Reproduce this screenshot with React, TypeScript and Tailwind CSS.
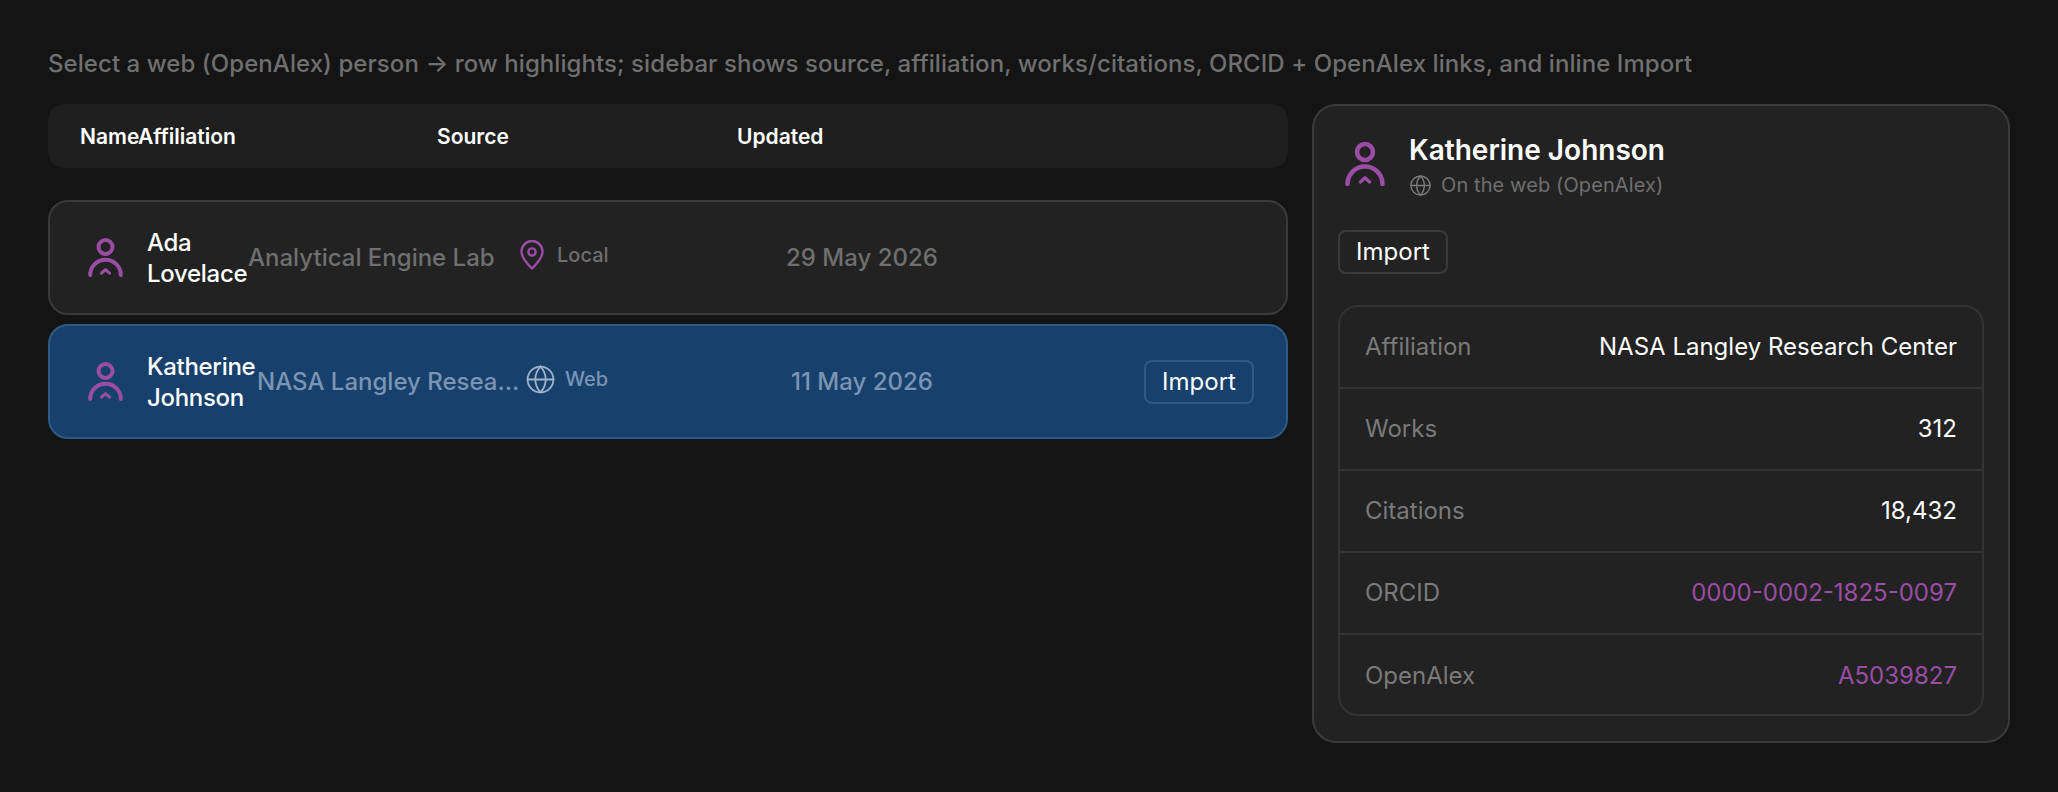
import { Globe } from "lucide-react";

function PersonIcon({ className }: { className?: string }) {
  return (
    <svg viewBox="0 0 35 39" fill="none" stroke="#9b4ca5" strokeLinecap="round" strokeLinejoin="round" className={className}>
      <circle cx="17.5" cy="9" r="7" strokeWidth="4" />
      <path d="M2.2 37a15.3 15.3 0 0 1 30.6 0" strokeWidth="4" />
      <path d="M13.5 35.2l4-3.6 4 3.6" strokeWidth="3" />
    </svg>
  );
}

function PinIcon() {
  return (
    <svg viewBox="0 0 24 30" fill="none" stroke="#9b4ca5" strokeWidth="2.4" strokeLinejoin="round" className="h-[30px] w-[24px] shrink-0">
      <path d="M12 28.5C8 24.5 1.5 18.5 1.5 11.5a10.5 10.5 0 0 1 21 0C22.5 18.5 16 24.5 12 28.5z" />
      <circle cx="12" cy="12" r="3.6" />
    </svg>
  );
}

function ImportButton({ selected }: { selected?: boolean }) {
  return (
    <button
      type="button"
      className={`flex h-[44px] items-center justify-center rounded-[8px] border-2 text-[24px] text-white ${
        selected ? "w-[110px] border-[#2f5a88]" : "w-[110px] border-[#3a3a3a]"
      }`}
    >
      Import
    </button>
  );
}

function DetailRow({ label, value, link }: { label: string; value: string; link?: boolean }) {
  return (
    <div className="flex h-[82px] items-center justify-between border-b-2 border-[#333333] px-[25px] last:border-b-0">
      <span className="text-[24px] text-[#7a7a7a]">{label}</span>
      <span className={`text-[24px] ${link ? "text-[#9b4ca5]" : "text-white"}`}>{value}</span>
    </div>
  );
}

export default function App() {
  return (
    <div className="h-[792px] bg-[#141414] px-[48px] pt-[48px] font-['Inter',sans-serif]">
      <p className="h-[32px] text-[24px] leading-[32px] font-medium tracking-[0.065px] whitespace-nowrap text-[#6f6f6f]">
        Select a web (OpenAlex) person → row highlights; sidebar shows source, affiliation, works/citations, ORCID + OpenAlex links, and inline Import
      </p>

      <div className="mt-[24px] flex gap-[24px]">
        <main className="w-[1240px]">
          <div className="flex h-[64px] items-center rounded-[16px] bg-[#1f1f1f] px-[32px] pt-[2px] text-[21px] font-semibold text-white">
            <span className="w-[58px]">Name</span>
            <span className="w-[299px]">Affiliation</span>
            <span className="w-[300px]">Source</span>
            <span>Updated</span>
          </div>

          <div className="mt-[32px] flex h-[115px] items-center rounded-[20px] border-2 border-[#3a3a3a] bg-[#222222] pl-[38px] pr-[32px]">
            <PersonIcon className="h-[39px] w-[35px] shrink-0" />
            <div className="ml-[24px] w-[101px] shrink-0 text-[24px] leading-[31px] font-medium tracking-[-0.3px] whitespace-nowrap text-white">
              Ada
              <br />
              Lovelace
            </div>
            <div className="w-[272px] shrink-0 text-[24px] font-medium whitespace-nowrap text-[#6f6f6f]">Analytical Engine Lab</div>
            <div className="mb-[5px] flex w-[266px] shrink-0 items-center gap-[13px]">
              <PinIcon />
              <span className="text-[20px] font-medium text-[#6f6f6f]">Local</span>
            </div>
            <div className="text-[24px] font-medium text-[#6f6f6f]">29 May 2026</div>
          </div>

          <div className="mt-[9px] flex h-[115px] items-center rounded-[20px] border-2 border-[#2f5a88] bg-[#17406d] pl-[38px] pr-[32px]">
            <PersonIcon className="h-[39px] w-[35px] shrink-0" />
            <div className="ml-[24px] w-[110px] shrink-0 text-[24px] leading-[31px] font-medium tracking-[-0.3px] whitespace-nowrap text-white">
              Katherine
              <br />
              Johnson
            </div>
            <div className="w-[268px] shrink-0 truncate text-[24px] font-medium text-[#7a95b3]">NASA Langley Research Center</div>
            <div className="mb-[5px] flex w-[266px] shrink-0 items-center gap-[9px]">
              <Globe className="size-[31px] shrink-0 text-[#9fb3c8]" strokeWidth={1.4} />
              <span className="text-[20px] font-medium text-[#7a95b3]">Web</span>
            </div>
            <div className="text-[24px] font-medium text-[#7a95b3]">11 May 2026</div>
            <div className="ml-auto">
              <ImportButton selected />
            </div>
          </div>
        </main>

        <aside className="h-[639px] w-[698px] rounded-[24px] border-2 border-[#3a3a3a] bg-[#222222] px-[24px] pt-[26px]">
          <div className="flex items-start">
            <PersonIcon className="ml-[7px] mt-[9px] h-[46px] w-[40px] shrink-0" />
            <div className="ml-[24px]">
              <div className="text-[28px] leading-[36px] font-semibold whitespace-nowrap text-white">Katherine Johnson</div>
              <div className="mt-[2px] flex items-center gap-[9px]">
                <Globe className="size-[23px] text-[#7a7a7a]" strokeWidth={1.5} />
                <span className="text-[20px] tracking-[0.1px] text-[#6f6f6f]">On the web (OpenAlex)</span>
              </div>
            </div>
          </div>
          <div className="mt-[30px]">
            <ImportButton />
          </div>
          <div className="mt-[31px] h-[411px] rounded-[20px] border-2 border-[#333333]">
            <DetailRow label="Affiliation" value="NASA Langley Research Center" />
            <DetailRow label="Works" value="312" />
            <DetailRow label="Citations" value="18,432" />
            <DetailRow label="ORCID" value="0000-0002-1825-0097" link />
            <DetailRow label="OpenAlex" value="A5039827" link />
          </div>
        </aside>
      </div>
    </div>
  );
}
